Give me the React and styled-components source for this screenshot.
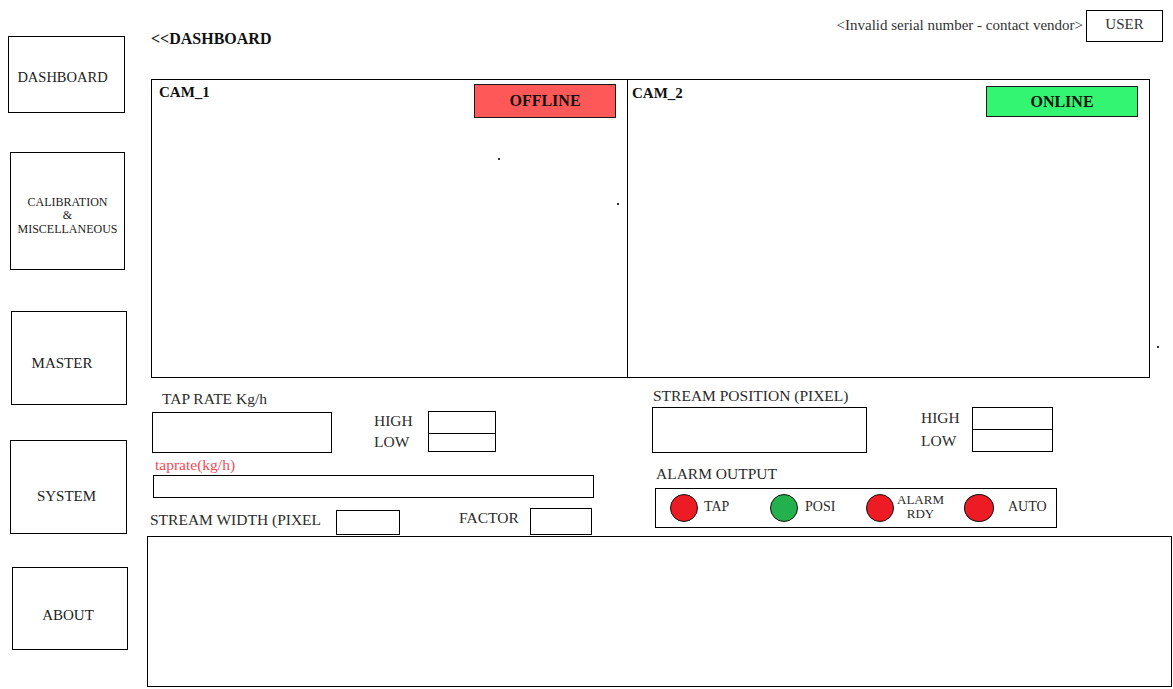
import React from "react";
import styled, { createGlobalStyle } from "styled-components";

const GlobalStyle = createGlobalStyle`
  html, body {
    margin: 0;
    padding: 0;
    background: #ffffff;
  }
  body {
    font-family: "Liberation Serif", "Times New Roman", serif;
    color: #222222;
  }
  * {
    box-sizing: border-box;
  }
`;

const Page = styled.div`
  display: flex;
  width: 1173px;
  height: 689px;
  overflow: hidden;
  background: #ffffff;
`;

const Sidebar = styled.nav`
  display: flex;
  flex-direction: column;
  width: 147px;
  flex-shrink: 0;
  padding-top: 36px;
`;

const NavButton = styled.div`
  display: flex;
  flex-direction: column;
  align-items: center;
  justify-content: center;
  margin-left: ${(p) => p.$x}px;
  margin-top: ${(p) => p.$mt || 0}px;
  width: ${(p) => p.$w}px;
  height: ${(p) => p.$h}px;
  padding: ${(p) => p.$pad || "0"};
  border: 1px solid #000000;
  font-size: ${(p) => p.$size || 15}px;
  line-height: ${(p) => p.$lh || 18}px;
  color: #222222;
  text-align: center;
`;

const Main = styled.main`
  display: flex;
  flex-direction: column;
  flex: 1;
  min-width: 0;
`;

const Header = styled.header`
  display: flex;
  align-items: flex-start;
  height: 79px;
`;

const PageTitle = styled.div`
  margin: 30px 0 0 4px;
  font-size: 16px;
  line-height: 18px;
  font-weight: 700;
  color: #111111;
`;

const Spacer = styled.div`
  flex: 1;
`;

const SerialNotice = styled.div`
  margin-top: 17px;
  font-size: 15px;
  line-height: 16px;
  color: #333333;
`;

const UserButton = styled.div`
  display: flex;
  justify-content: center;
  margin: 10px 10px 0 3px;
  width: 77px;
  height: 32px;
  padding-top: 4px;
  border: 1px solid #000000;
  font-size: 15px;
  line-height: 18px;
  color: #333333;
`;

const CamPanel = styled.section`
  position: relative;
  display: flex;
  margin-left: 4px;
  width: 999px;
  height: 299px;
  border: 1px solid #000000;
`;

const CamView = styled.div`
  position: relative;
  display: flex;
  align-items: flex-start;
  justify-content: space-between;
  width: ${(p) => (p.$w ? `${p.$w}px` : "auto")};
  flex: ${(p) => (p.$w ? "0 0 auto" : "1")};
  padding: ${(p) => p.$pt || 4}px ${(p) => p.$pr}px 0 ${(p) => p.$pl}px;
  border-right: ${(p) => (p.$divider ? "1px solid #000000" : "none")};
`;

const CamLabel = styled.div`
  font-size: 15px;
  line-height: 17px;
  font-weight: 700;
  color: #111111;
`;

const StatusBadge = styled.div`
  display: flex;
  align-items: center;
  justify-content: center;
  margin-top: ${(p) => p.$mt || 0}px;
  width: ${(p) => p.$w}px;
  height: ${(p) => p.$h}px;
  background: ${(p) => (p.$online ? "#33f571" : "#ff5858")};
  border: 1px solid #1a1a1a;
  font-size: 16px;
  font-weight: 700;
  color: #111111;
`;

const Speck = styled.span`
  position: absolute;
  left: ${(p) => p.$x}px;
  top: ${(p) => p.$y}px;
  width: 2px;
  height: 2px;
  background: #333333;
`;

const Controls = styled.section`
  display: flex;
  height: 158px;
`;

const Column = styled.div`
  display: flex;
  flex-direction: column;
  width: ${(p) => (p.$w ? `${p.$w}px` : "auto")};
  flex: ${(p) => (p.$w ? "0 0 auto" : "1")};
`;

const Label = styled.div`
  margin: ${(p) => p.$mt || 0}px 0 0 ${(p) => p.$ml || 0}px;
  width: ${(p) => (p.$w ? `${p.$w}px` : "auto")};
  flex-shrink: 0;
  font-size: ${(p) => p.$size || 15.5}px;
  line-height: ${(p) => p.$lh || 18}px;
  color: ${(p) => p.$color || "#2b2b2b"};
  white-space: nowrap;
`;

const Row = styled.div`
  display: flex;
  align-items: flex-start;
  margin-top: ${(p) => p.$mt || 0}px;
`;

const Field = styled.div`
  margin: ${(p) => p.$mt || 0}px 0 0 ${(p) => p.$ml || 0}px;
  width: ${(p) => p.$w}px;
  height: ${(p) => p.$h}px;
  border: 1px solid #000000;
  flex-shrink: 0;
`;

const LimitLabels = styled.div`
  display: flex;
  flex-direction: column;
  margin: ${(p) => p.$mt || 0}px 0 0 ${(p) => p.$ml}px;
  width: ${(p) => p.$w}px;
  font-size: 15.5px;
  line-height: ${(p) => p.$lh}px;
  color: #2b2b2b;
`;

const LimitBox = styled.div`
  display: flex;
  flex-direction: column;
  margin-top: ${(p) => p.$mt || 0}px;
  width: ${(p) => p.$w}px;
  height: ${(p) => p.$h}px;
  border: 1px solid #000000;
`;

const LimitCell = styled.div`
  height: ${(p) => p.$h}px;
  border-bottom: 1px solid #000000;
`;

const AlarmPanel = styled.div`
  display: flex;
  align-items: center;
  margin: 5px 0 0 8px;
  width: 402px;
  height: 40px;
  padding-left: 14px;
  border: 1px solid #000000;
`;

const AlarmItem = styled.div`
  display: flex;
  align-items: center;
  gap: ${(p) => p.$gap}px;
  width: ${(p) => (p.$w ? `${p.$w}px` : "auto")};
`;

const Lamp = styled.span`
  width: ${(p) => p.$w || 28}px;
  height: 28px;
  border-radius: 50%;
  background: ${(p) => (p.$on ? "#22b14c" : "#ed1c24")};
  border: 1px solid #111111;
  flex-shrink: 0;
`;

const AlarmText = styled.div`
  font-size: ${(p) => p.$size || 14}px;
  line-height: ${(p) => p.$lh || 16}px;
  margin-top: ${(p) => p.$mt || 0}px;
  color: #2b2b2b;
  text-align: center;
`;

const LogArea = styled.section`
  width: 1025px;
  height: 151px;
  border: 1px solid #000000;
`;

const navItems = [
  { label: "DASHBOARD", x: 8, w: 117, h: 77, mt: 0, size: 14.5, pad: "5px 8px 0 0" },
  {
    label: (
      <>
        CALIBRATION
        <br />&amp;
        <br />
        MISCELLANEOUS
      </>
    ),
    x: 10,
    w: 115,
    h: 118,
    mt: 39,
    size: 12,
    lh: 13.5,
    pad: "10px 0 0 0",
  },
  { label: "MASTER", x: 11, w: 116, h: 94, mt: 41, pad: "10px 14px 0 0" },
  { label: "SYSTEM", x: 10, w: 117, h: 94, mt: 35, pad: "18px 4px 0 0" },
  { label: "ABOUT", x: 12, w: 116, h: 83, mt: 33, pad: "12px 4px 0 0" },
];

const alarms = [
  { label: "TAP", w: 100, gap: 6 },
  { label: "POSI", w: 96, gap: 7, on: true },
  { label: "ALARM\nRDY", w: 98, gap: 3, small: true },
  { label: "AUTO", gap: 14, lamp: 30 },
];

export default function App() {
  return (
    <>
      <GlobalStyle />
      <Page>
        <Sidebar>
          {navItems.map((n, i) => (
            <NavButton
              key={i}
              $x={n.x}
              $w={n.w}
              $h={n.h}
              $mt={n.mt}
              $size={n.size}
              $lh={n.lh}
              $pad={n.pad}
            >
              <div>{n.label}</div>
            </NavButton>
          ))}
        </Sidebar>

        <Main>
          <Header>
            <PageTitle>&lt;&lt;DASHBOARD</PageTitle>
            <Spacer />
            <SerialNotice>&lt;Invalid serial number - contact vendor&gt;</SerialNotice>
            <UserButton>USER</UserButton>
          </Header>

          <CamPanel>
            <CamView $w={476} $divider $pl={7} $pr={11}>
              <CamLabel>CAM_1</CamLabel>
              <StatusBadge $w={142} $h={34}>
                OFFLINE
              </StatusBadge>
              <Speck $x={346} $y={78} />
              <Speck $x={465} $y={123} />
            </CamView>
            <CamView $pl={4} $pr={11} $pt={5}>
              <CamLabel>CAM_2</CamLabel>
              <StatusBadge $online $w={152} $h={31} $mt={1}>
                ONLINE
              </StatusBadge>
            </CamView>
            <Speck $x={1005} $y={266} />
          </CamPanel>

          <Controls>
            <Column $w={500}>
              <Label $ml={15} $mt={12}>
                TAP RATE Kg/h
              </Label>
              <Row $mt={4}>
                <Field $ml={5} $w={180} $h={41} />
                <LimitLabels $ml={42} $w={54} $lh={21} $mt={-2}>
                  <span>HIGH</span>
                  <span>LOW</span>
                </LimitLabels>
                <LimitBox $w={68} $h={41} $mt={-1}>
                  <LimitCell $h={22} />
                </LimitBox>
              </Row>
              <Label $ml={8} $mt={4} $size={15.5} $lh={16} $color="#f24b57">
                taprate(kg/h)
              </Label>
              <Field $ml={6} $mt={2} $w={441} $h={23} />
              <Row $mt={10}>
                <Label $ml={3} $mt={3} $w={186}>
                  STREAM WIDTH (PIXEL
                </Label>
                <Field $mt={2} $w={64} $h={25} />
                <Label $ml={59} $mt={1} $w={71}>
                  FACTOR
                </Label>
                <Field $w={62} $h={27} />
              </Row>
            </Column>

            <Column>
              <Label $ml={6} $mt={9}>
                STREAM POSITION (PIXEL)
              </Label>
              <Row $mt={2}>
                <Field $ml={5} $w={215} $h={46} />
                <LimitLabels $ml={54} $w={51} $lh={23} $mt={-1}>
                  <span>HIGH</span>
                  <span>LOW</span>
                </LimitLabels>
                <LimitBox $w={81} $h={45}>
                  <LimitCell $h={22} />
                </LimitBox>
              </Row>
              <Label $ml={9} $mt={12}>
                ALARM OUTPUT
              </Label>
              <AlarmPanel>
                {alarms.map((a) => (
                  <AlarmItem key={a.label} $w={a.w} $gap={a.gap}>
                    <Lamp $on={a.on} $w={a.lamp} />
                    <AlarmText
                      $size={a.small ? 13 : 14}
                      $lh={a.small ? 14 : 16}
                      $mt={a.small ? -3 : -2}
                    >
                      {a.label.split("\n").map((t) => (
                        <div key={t}>{t}</div>
                      ))}
                    </AlarmText>
                  </AlarmItem>
                ))}
              </AlarmPanel>
            </Column>
          </Controls>

          <LogArea />
        </Main>
      </Page>
    </>
  );
}
